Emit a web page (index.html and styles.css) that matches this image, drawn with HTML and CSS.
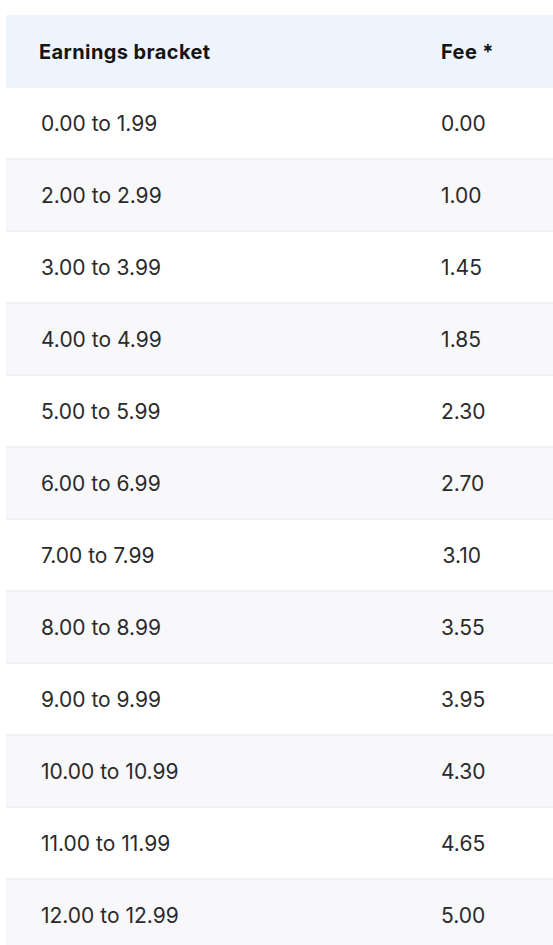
FILE: index.html
```html
<!DOCTYPE html>
<html>
<head>
    <title>Earnings bracket fees</title>
    <link rel="stylesheet" href="styles.css">
</head>
<body>
    <table class="fees">
        <thead>
            <tr>
                <th class="bracket">Earnings bracket</th>
                <th class="fee">Fee *</th>
            </tr>
        </thead>
        <tbody>
            <tr><td class="bracket">0.00 to 1.99</td><td class="fee">0.00</td></tr>
            <tr><td class="bracket">2.00 to 2.99</td><td class="fee">1.00</td></tr>
            <tr><td class="bracket">3.00 to 3.99</td><td class="fee">1.45</td></tr>
            <tr><td class="bracket">4.00 to 4.99</td><td class="fee">1.85</td></tr>
            <tr><td class="bracket">5.00 to 5.99</td><td class="fee">2.30</td></tr>
            <tr><td class="bracket">6.00 to 6.99</td><td class="fee">2.70</td></tr>
            <tr><td class="bracket">7.00 to 7.99</td><td class="fee">3.10</td></tr>
            <tr><td class="bracket">8.00 to 8.99</td><td class="fee">3.55</td></tr>
            <tr><td class="bracket">9.00 to 9.99</td><td class="fee">3.95</td></tr>
            <tr><td class="bracket">10.00 to 10.99</td><td class="fee">4.30</td></tr>
            <tr><td class="bracket">11.00 to 11.99</td><td class="fee">4.65</td></tr>
            <tr><td class="bracket">12.00 to 12.99</td><td class="fee">5.00</td></tr>
        </tbody>
    </table>
</body>
</html>
```

FILE: styles.css
```css
body {
    margin: 0;
    padding: 15px 0 0 6px;
    background: #ffffff;
    font-family: Inter, "Noto Sans", sans-serif;
    color: #2a2a2c;
}
.fees {
    width: 547px;
    border-collapse: collapse;
    table-layout: fixed;
}
.fees th {
    height: 73px;
    padding: 0;
    background-color: #edf4fe;
    color: #141414;
    font-size: 20px;
    font-weight: 700;
    letter-spacing: 0.4px;
    text-align: left;
}
.fees td {
    height: 70px;
    padding: 0;
    font-size: 21px;
    font-weight: 400;
}
.fees tbody tr:nth-child(even) td {
    background-color: #f8f8fa;
    border-top: 2px solid #f1f1f4;
    border-bottom: 2px solid #f1f1f4;
}
.fees .bracket {
    width: 402px;
    padding-left: 33px;
}
.fees td.bracket {
    padding-left: 35px;
    width: 400px;
}
.fees th.fee {
    padding-left: 0;
}
.fees td.fee {
    text-align: right;
    padding-right: 72px;
}
```
